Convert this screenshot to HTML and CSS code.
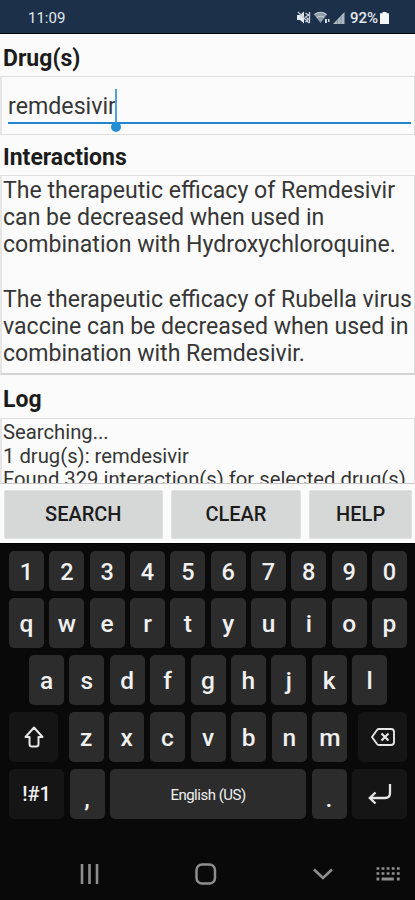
FILE: index.html
```html
<!DOCTYPE html>
<html lang="en">
<head>
    <meta charset="UTF-8">
    <meta name="viewport" content="width=device-width, initial-scale=1.0">
    <title>Drug Interactions</title>
    <link rel="stylesheet" href="styles.css">
</head>
<body>
    <header class="status-bar">
        <span class="clock">11:09</span>
        <div class="status-icons">
            <svg class="mute" width="14" height="13" viewBox="0 0 14 13">
                <path d="M0 4h3l4-3.5v12L3 9H0z" fill="#e3e8ee"/>
                <path d="M1 1l11 11M8.5 2l3 2-3 2 3 2-3 3M12.5 1v11" fill="none" stroke="#c3ccd6" stroke-width="1.3"/>
            </svg>
            <svg class="wifi" width="16" height="13" viewBox="0 0 16 13">
                <path d="M0 3.5Q6.5-1.5 13 3.5L6.5 12z" fill="#8d9aa8"/>
                <path d="M.5 3.5Q6.5-1 12.5 3.5M3 6.5q3.5-2.5 7 0" fill="none" stroke="#c4ccd5" stroke-width="1.2"/>
                <path d="M11 8h2v4h-2zM14 8h1.5v3H14z" fill="#d5dbe2"/>
            </svg>
            <svg class="signal" width="12" height="12" viewBox="0 0 12 12">
                <path d="M0 12L11.5 0v12z" fill="#aeb8c2"/>
                <path d="M4.5 7v5M8 4v8" stroke="#74869a" stroke-width=".8"/>
            </svg>
            <span class="percent">92%</span>
            <svg class="battery" width="9" height="12" viewBox="0 0 9 12">
                <path d="M2.5 0h4v1.3H9V12H0V1.3h2.5z" fill="#f4f6f8"/>
            </svg>
        </div>
    </header>

    <main class="app">
        <h2>Drug(s)</h2>
        <div class="box drug-box">
            <div class="drug-input"><span class="drug-name">remdesivir<i class="cursor"></i></span></div>
        </div>

        <h2 class="title-interactions">Interactions</h2>
        <div class="box interactions">
            <p>The therapeutic efficacy of Remdesivir<br>can be decreased when used in<br>combination with Hydroxychloroquine.</p>
            <p>The therapeutic efficacy of Rubella virus<br>vaccine can be decreased when used in<br>combination with Remdesivir.</p>
        </div>

        <h2 class="title-log">Log</h2>
        <div class="box log">
            <div>Searching...</div>
            <div>1 drug(s): remdesivir</div>
            <div>Found 329 interaction(s) for selected drug(s)</div>
        </div>

        <div class="buttons">
            <button class="search">SEARCH</button>
            <button class="clear">CLEAR</button>
            <button class="help">HELP</button>
        </div>
    </main>

    <section class="keyboard">
        <div class="row numbers">
            <span class="key">1</span><span class="key">2</span><span class="key">3</span><span class="key">4</span><span class="key">5</span><span class="key">6</span><span class="key">7</span><span class="key">8</span><span class="key">9</span><span class="key">0</span>
        </div>
        <div class="row">
            <span class="key">q</span><span class="key">w</span><span class="key">e</span><span class="key">r</span><span class="key">t</span><span class="key">y</span><span class="key">u</span><span class="key">i</span><span class="key">o</span><span class="key">p</span>
        </div>
        <div class="row middle">
            <span class="key">a</span><span class="key">s</span><span class="key">d</span><span class="key">f</span><span class="key">g</span><span class="key">h</span><span class="key">j</span><span class="key">k</span><span class="key">l</span>
        </div>
        <div class="row">
            <span class="key dark shift">
                <svg width="20" height="22" viewBox="0 0 20 22">
                    <path d="M10 1.5L1.5 11h4v7q0 2.5 2.5 2.5h4q2.5 0 2.5-2.5v-7h4z" fill="none" stroke="#e6e6e6" stroke-width="2" stroke-linejoin="round"/>
                </svg>
            </span>
            <span class="key">z</span><span class="key">x</span><span class="key">c</span><span class="key">v</span><span class="key">b</span><span class="key">n</span><span class="key">m</span>
            <span class="key dark backspace">
                <svg width="24" height="18" viewBox="0 0 24 18">
                    <path d="M8 1h12q3 0 3 3v10q0 3-3 3H8q-1.2 0-2-1L1 9l5-7q.8-1 2-1z" fill="none" stroke="#e6e6e6" stroke-width="1.9" stroke-linejoin="round"/>
                    <path d="M10.5 5.5l7 7M17.5 5.5l-7 7" stroke="#e6e6e6" stroke-width="2.2"/>
                </svg>
            </span>
        </div>
        <div class="row">
            <span class="key dark symbols">!#1</span>
            <span class="key punct">,</span>
            <span class="key space">English (US)</span>
            <span class="key punct">.</span>
            <span class="key dark enter">
                <svg width="24" height="20" viewBox="0 0 24 20">
                    <path d="M22 0v9q0 5-5 5H2M7.5 8.5L1.8 14l5.7 5.5" fill="none" stroke="#e6e6e6" stroke-width="2.3"/>
                </svg>
            </span>
        </div>
    </section>

    <nav class="nav-bar">
        <svg class="recents" width="20" height="20" viewBox="0 0 20 20">
            <path d="M2 0v20M9.5 0v20M17 0v20" stroke="#8e8e8e" stroke-width="2.6"/>
        </svg>
        <svg class="home" width="22" height="22" viewBox="0 0 22 22">
            <rect x="1.5" y="1.5" width="18.5" height="19" rx="5.5" fill="none" stroke="#8e8e8e" stroke-width="2.5"/>
        </svg>
        <svg class="hide" width="20" height="12" viewBox="0 0 20 12">
            <path d="M1 1.5l9 8.5 9-8.5" fill="none" stroke="#8e8e8e" stroke-width="2.6"/>
        </svg>
        <svg class="switch" width="24" height="14" viewBox="0 0 24 14">
            <path d="M.5 1.5H24M.5 6.5H24" stroke="#8e8e8e" stroke-width="2.6" stroke-dasharray="2.8 2.3"/>
            <path d="M.5 12h2.8M5.6 12h12.2M20.9 12h2.8" stroke="#8e8e8e" stroke-width="2.8"/>
        </svg>
    </nav>
</body>
</html>
```

FILE: styles.css
```css
* {
    box-sizing: border-box;
}
body {
    margin: 0;
    width: 415px;
    height: 900px;
    overflow: hidden;
    font-family: Roboto, "Liberation Sans", sans-serif;
    background: #090909;
}
.status-bar {
    display: flex;
    justify-content: space-between;
    align-items: center;
    height: 34px;
    padding: 2px 26px 0 28px;
    background: #1c3049;
    border-bottom: 1px solid #05080c;
    color: #e3e8ee;
    font-size: 15px;
}
.status-icons {
    display: flex;
    align-items: center;
}
.wifi {
    margin-left: 3px;
}
.signal {
    margin: 0 5px 0 3px;
}
.percent {
    font-weight: 500;
}
.battery {
    margin-left: 2px;
}
.app {
    height: 509px;
    background: #fbfbfb;
    color: #1c1c1c;
}
h2 {
    height: 42px;
    margin: 0;
    padding-left: 3px;
    font-size: 23px;
    font-weight: 700;
    line-height: 50px;
}
.title-interactions {
    height: 40px;
    line-height: 46px;
}
.title-log {
    height: 43px;
    line-height: 50px;
}
.box {
    border: 1px solid #dedede;
    border-left: 2px solid #e6e6e6;
    overflow: hidden;
    white-space: nowrap;
    color: #363636;
}
.drug-box {
    height: 59px;
    padding: 9px 3px 0 6px;
}
.drug-input {
    height: 38px;
    border-bottom: 2px solid #1f86cc;
    font-size: 23.2px;
    line-height: 40px;
}
.drug-name {
    position: relative;
}
.cursor {
    position: absolute;
    right: -1px;
    top: -3px;
    width: 2px;
    height: 36px;
    background: #4fa3da;
}
.cursor::after {
    content: "";
    position: absolute;
    left: -4px;
    top: 33px;
    width: 10px;
    height: 10px;
    border-radius: 50%;
    background: #2490d6;
}
.interactions {
    height: 200px;
    padding: 1px 0 0 1px;
    border-bottom: 2px solid #d4d4d4;
    font-size: 23.08px;
    line-height: 27.15px;
}
.interactions p {
    margin: 0 0 27.15px;
}
.log {
    height: 66px;
    padding: 2px 0 0 1px;
    border-bottom-color: #c8c8c8;
    font-size: 20.25px;
    line-height: 23.5px;
}
.buttons {
    display: flex;
    padding: 6px 3px 0 4px;
}
button {
    height: 49px;
    padding: 0 0 2px;
    border: 1px solid #dfe0e0;
    border-radius: 2px;
    background: #d6d7d7;
    color: #1c1c1c;
    font: 500 20px Roboto, "Liberation Sans", sans-serif;
}
.search {
    width: 159px;
}
.clear {
    width: 131px;
    margin: 0 8px;
}
.help {
    width: 103px;
}
.keyboard {
    display: flex;
    flex-direction: column;
    gap: 7px;
    height: 277px;
    padding: 7px 8px 0 9px;
    border-top: 1px solid #000;
}
.row {
    display: flex;
    justify-content: space-between;
    height: 50px;
}
.numbers {
    height: 40px;
}
.middle {
    padding: 0 20px;
}
.key {
    display: flex;
    align-items: center;
    justify-content: center;
    width: 35px;
    border-radius: 5px;
    background: #2c2c2c;
    color: #f0f0f0;
    font-size: 24.5px;
    font-weight: 500;
}
.numbers .key {
    padding-top: 2px;
    font-size: 23.5px;
}
.dark {
    background: #151515;
}
.shift {
    width: 49px;
    margin-right: 5px;
}
.backspace {
    width: 49px;
    margin-left: 5px;
}
.symbols {
    width: 55px;
    font-size: 20px;
}
.punct {
    padding-top: 8px;
}
.space {
    width: 196px;
    padding-top: 2px;
    font-size: 15px;
    font-weight: 400;
    letter-spacing: -.5px;
}
.enter {
    width: 55px;
}
.nav-bar {
    display: flex;
    align-items: center;
    height: 80px;
    padding: 28px 0 0 80px;
}
.home {
    margin-left: 95px;
}
.hide {
    margin-left: 96px;
}
.switch {
    margin-left: 43px;
}
```
